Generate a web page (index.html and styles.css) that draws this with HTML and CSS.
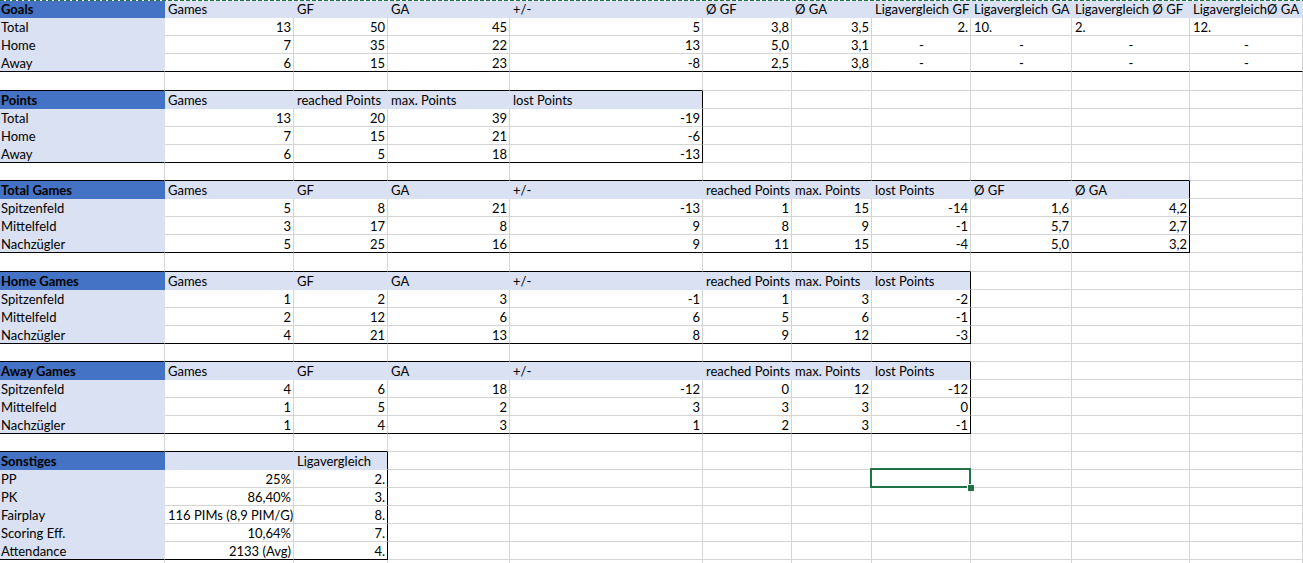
FILE: index.html
```html
<!DOCTYPE html>
<html lang="de">
<head>
<meta charset="utf-8">
<title>Statistik</title>
<link rel="stylesheet" href="styles.css">
</head>
<body>
<div class="sheet">
  <div class="marquee"></div>

  <div class="row r1">
    <div class="c h a">Goals</div><div class="c l">Games</div><div class="c l">GF</div><div class="c l">GA</div><div class="c l">+/-</div><div class="c l">Ø GF</div><div class="c l">Ø GA</div><div class="c l">Ligavergleich GF</div><div class="c l">Ligavergleich GA</div><div class="c l">Ligavergleich Ø GF</div><div class="c l">LigavergleichØ GA</div>
  </div>
  <div class="row">
    <div class="c l a">Total</div><div class="c n">13</div><div class="c n">50</div><div class="c n">45</div><div class="c n">5</div><div class="c n">3,8</div><div class="c n">3,5</div><div class="c n">2.</div><div class="c">10.</div><div class="c">2.</div><div class="c">12.</div>
  </div>
  <div class="row">
    <div class="c l a">Home</div><div class="c n">7</div><div class="c n">35</div><div class="c n">22</div><div class="c n">13</div><div class="c n">5,0</div><div class="c n">3,1</div><div class="c m">-</div><div class="c m">-</div><div class="c m">-</div><div class="c m">-</div>
  </div>
  <div class="row">
    <div class="c l a bb">Away</div><div class="c n bb">6</div><div class="c n bb">15</div><div class="c n bb">23</div><div class="c n bb">-8</div><div class="c n bb">2,5</div><div class="c n bb">3,8</div><div class="c m bb">-</div><div class="c m bb">-</div><div class="c m bb">-</div><div class="c m bb">-</div>
  </div>
  <div class="row tall">
    <div class="c bb"></div><div class="c bb"></div><div class="c bb"></div><div class="c bb"></div><div class="c bb"></div><div class="c"></div><div class="c"></div><div class="c"></div><div class="c"></div><div class="c"></div><div class="c"></div>
  </div>

  <div class="row">
    <div class="c h a">Points</div><div class="c l">Games</div><div class="c l">reached Points</div><div class="c l">max. Points</div><div class="c l br">lost Points</div><div class="c"></div><div class="c"></div><div class="c"></div><div class="c"></div><div class="c"></div><div class="c"></div>
  </div>
  <div class="row">
    <div class="c l a">Total</div><div class="c n">13</div><div class="c n">20</div><div class="c n">39</div><div class="c n br">-19</div><div class="c"></div><div class="c"></div><div class="c"></div><div class="c"></div><div class="c"></div><div class="c"></div>
  </div>
  <div class="row">
    <div class="c l a">Home</div><div class="c n">7</div><div class="c n">15</div><div class="c n">21</div><div class="c n br">-6</div><div class="c"></div><div class="c"></div><div class="c"></div><div class="c"></div><div class="c"></div><div class="c"></div>
  </div>
  <div class="row">
    <div class="c l a bb">Away</div><div class="c n bb">6</div><div class="c n bb">5</div><div class="c n bb">18</div><div class="c n br bb">-13</div><div class="c"></div><div class="c"></div><div class="c"></div><div class="c"></div><div class="c"></div><div class="c"></div>
  </div>
  <div class="row">
    <div class="c bb"></div><div class="c bb"></div><div class="c bb"></div><div class="c bb"></div><div class="c bb"></div><div class="c bb"></div><div class="c bb"></div><div class="c bb"></div><div class="c bb"></div><div class="c bb"></div><div class="c"></div>
  </div>

  <div class="row">
    <div class="c h a">Total Games</div><div class="c l">Games</div><div class="c l">GF</div><div class="c l">GA</div><div class="c l">+/-</div><div class="c l">reached Points</div><div class="c l">max. Points</div><div class="c l">lost Points</div><div class="c l">Ø GF</div><div class="c l br">Ø GA</div><div class="c"></div>
  </div>
  <div class="row">
    <div class="c l a">Spitzenfeld</div><div class="c n">5</div><div class="c n">8</div><div class="c n">21</div><div class="c n">-13</div><div class="c n">1</div><div class="c n">15</div><div class="c n">-14</div><div class="c n">1,6</div><div class="c n br">4,2</div><div class="c"></div>
  </div>
  <div class="row">
    <div class="c l a">Mittelfeld</div><div class="c n">3</div><div class="c n">17</div><div class="c n">8</div><div class="c n">9</div><div class="c n">8</div><div class="c n">9</div><div class="c n">-1</div><div class="c n">5,7</div><div class="c n br">2,7</div><div class="c"></div>
  </div>
  <div class="row">
    <div class="c l a bb">Nachzügler</div><div class="c n bb">5</div><div class="c n bb">25</div><div class="c n bb">16</div><div class="c n bb">9</div><div class="c n bb">11</div><div class="c n bb">15</div><div class="c n bb">-4</div><div class="c n bb">5,0</div><div class="c n br bb">3,2</div><div class="c"></div>
  </div>
  <div class="row tall">
    <div class="c bb"></div><div class="c bb"></div><div class="c bb"></div><div class="c bb"></div><div class="c bb"></div><div class="c bb"></div><div class="c bb"></div><div class="c bb"></div><div class="c"></div><div class="c"></div><div class="c"></div>
  </div>

  <div class="row">
    <div class="c h a">Home Games</div><div class="c l">Games</div><div class="c l">GF</div><div class="c l">GA</div><div class="c l">+/-</div><div class="c l">reached Points</div><div class="c l">max. Points</div><div class="c l br">lost Points</div><div class="c"></div><div class="c"></div><div class="c"></div>
  </div>
  <div class="row">
    <div class="c l a">Spitzenfeld</div><div class="c n">1</div><div class="c n">2</div><div class="c n">3</div><div class="c n">-1</div><div class="c n">1</div><div class="c n">3</div><div class="c n br">-2</div><div class="c"></div><div class="c"></div><div class="c"></div>
  </div>
  <div class="row">
    <div class="c l a">Mittelfeld</div><div class="c n">2</div><div class="c n">12</div><div class="c n">6</div><div class="c n">6</div><div class="c n">5</div><div class="c n">6</div><div class="c n br">-1</div><div class="c"></div><div class="c"></div><div class="c"></div>
  </div>
  <div class="row">
    <div class="c l a bb">Nachzügler</div><div class="c n bb">4</div><div class="c n bb">21</div><div class="c n bb">13</div><div class="c n bb">8</div><div class="c n bb">9</div><div class="c n bb">12</div><div class="c n br bb">-3</div><div class="c"></div><div class="c"></div><div class="c"></div>
  </div>
  <div class="row">
    <div class="c bb"></div><div class="c bb"></div><div class="c bb"></div><div class="c bb"></div><div class="c bb"></div><div class="c bb"></div><div class="c bb"></div><div class="c bb"></div><div class="c"></div><div class="c"></div><div class="c"></div>
  </div>

  <div class="row">
    <div class="c h a">Away Games</div><div class="c l">Games</div><div class="c l">GF</div><div class="c l">GA</div><div class="c l">+/-</div><div class="c l">reached Points</div><div class="c l">max. Points</div><div class="c l br">lost Points</div><div class="c"></div><div class="c"></div><div class="c"></div>
  </div>
  <div class="row">
    <div class="c l a">Spitzenfeld</div><div class="c n">4</div><div class="c n">6</div><div class="c n">18</div><div class="c n">-12</div><div class="c n">0</div><div class="c n">12</div><div class="c n br">-12</div><div class="c"></div><div class="c"></div><div class="c"></div>
  </div>
  <div class="row">
    <div class="c l a">Mittelfeld</div><div class="c n">1</div><div class="c n">5</div><div class="c n">2</div><div class="c n">3</div><div class="c n">3</div><div class="c n">3</div><div class="c n br">0</div><div class="c"></div><div class="c"></div><div class="c"></div>
  </div>
  <div class="row">
    <div class="c l a bb">Nachzügler</div><div class="c n bb">1</div><div class="c n bb">4</div><div class="c n bb">3</div><div class="c n bb">1</div><div class="c n bb">2</div><div class="c n bb">3</div><div class="c n br bb">-1</div><div class="c"></div><div class="c"></div><div class="c"></div>
  </div>
  <div class="row">
    <div class="c bb"></div><div class="c bb"></div><div class="c bb"></div><div class="c"></div><div class="c"></div><div class="c"></div><div class="c"></div><div class="c"></div><div class="c"></div><div class="c"></div><div class="c"></div>
  </div>

  <div class="row">
    <div class="c h a">Sonstiges</div><div class="c l"></div><div class="c l br">Ligavergleich</div><div class="c"></div><div class="c"></div><div class="c"></div><div class="c"></div><div class="c"></div><div class="c"></div><div class="c"></div><div class="c"></div>
  </div>
  <div class="row">
    <div class="c l a">PP</div><div class="c n">25%</div><div class="c n br">2.</div><div class="c"></div><div class="c"></div><div class="c"></div><div class="c"></div><div class="c sel"><span class="selbox"><span class="handle"></span></span></div><div class="c"></div><div class="c"></div><div class="c"></div>
  </div>
  <div class="row">
    <div class="c l a">PK</div><div class="c n">86,40%</div><div class="c n br">3.</div><div class="c"></div><div class="c"></div><div class="c"></div><div class="c"></div><div class="c"></div><div class="c"></div><div class="c"></div><div class="c"></div>
  </div>
  <div class="row">
    <div class="c l a">Fairplay</div><div class="c n">116 PIMs (8,9 PIM/G)</div><div class="c n br">8.</div><div class="c"></div><div class="c"></div><div class="c"></div><div class="c"></div><div class="c"></div><div class="c"></div><div class="c"></div><div class="c"></div>
  </div>
  <div class="row">
    <div class="c l a">Scoring Eff.</div><div class="c n">10,64%</div><div class="c n br">7.</div><div class="c"></div><div class="c"></div><div class="c"></div><div class="c"></div><div class="c"></div><div class="c"></div><div class="c"></div><div class="c"></div>
  </div>
  <div class="row">
    <div class="c l a bb">Attendance</div><div class="c n bb">2133 (Avg)</div><div class="c n br bb">4.</div><div class="c"></div><div class="c"></div><div class="c"></div><div class="c"></div><div class="c"></div><div class="c"></div><div class="c"></div><div class="c"></div>
  </div>
  <div class="row">
    <div class="c"></div><div class="c"></div><div class="c"></div><div class="c"></div><div class="c"></div><div class="c"></div><div class="c"></div><div class="c"></div><div class="c"></div><div class="c"></div><div class="c"></div>
  </div>
</div>
</body>
</html>
```

FILE: styles.css
```css
html, body {
  margin: 0;
  padding: 0;
  background: #ffffff;
}

body {
  font-family: Lato, "Liberation Sans", sans-serif;
  font-size: 13px;
  color: #000000;
  overflow: hidden;
}

.sheet {
  width: 1303px;
}

.marquee {
  height: 1px;
  background: repeating-linear-gradient(90deg, #217346 0 4px, #ffffff 4px 6px);
}

.row {
  display: grid;
  grid-template-columns: 165px 129px 94px 122px 193px 89px 80px 99px 101px 118px 113px;
  height: 18px;
}

.row.r1 {
  height: 17px;
}

.row.tall {
  height: 19px;
}

.c {
  box-sizing: border-box;
  height: 100%;
  border-right: 1px solid #d4d4d4;
  border-bottom: 1px solid #d4d4d4;
  padding: 1px 2px 0 3px;
  line-height: 17px;
  white-space: nowrap;
  overflow: hidden;
  background: #ffffff;
}

.r1 .c {
  padding-top: 0;
  line-height: 17px;
}

.a {
  padding-left: 1px;
}

.h {
  background: #4472c4;
  border-color: #4472c4;
  font-weight: bold;
}

.l {
  background: #d9e1f2;
  border-color: #d9e1f2;
}

.n {
  text-align: right;
}

.m {
  text-align: center;
}

.bb {
  border-bottom-color: #000000;
}

.br {
  border-right-color: #000000;
}

.sel {
  position: relative;
  overflow: visible;
}

.selbox {
  position: absolute;
  left: -2px;
  top: -2px;
  right: -1px;
  bottom: -1px;
  border: 2px solid #217346;
  z-index: 2;
}

.handle {
  position: absolute;
  right: -5px;
  bottom: -5px;
  width: 6px;
  height: 6px;
  background: #217346;
  border-left: 1px solid #ffffff;
  border-top: 1px solid #ffffff;
}
```
